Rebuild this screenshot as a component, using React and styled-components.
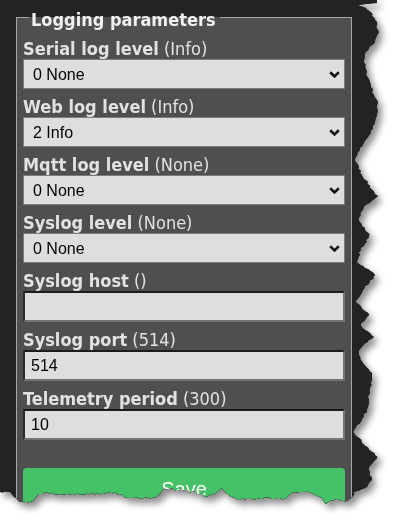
import React from 'react'
import styled, { createGlobalStyle } from 'styled-components'

const GlobalStyle = createGlobalStyle`
  html, body {
    margin: 0;
    padding: 0;
    background: #fff;
  }
`

// key points of the torn edge: right side top to bottom, then bottom right to left
const rightEdge = [
  [378, 0], [376, 3], [357, 5], [366, 8], [372, 14], [376, 22], [378, 32], [374, 42],
  [366, 52], [364, 62], [366, 72], [370, 82], [373, 92], [377, 102], [378, 112],
  [375, 122], [369, 135], [360, 148], [355, 160], [362, 175], [371, 188], [377, 196],
  [366, 205], [358, 220], [370, 236], [360, 250], [357, 262], [376, 275], [362, 290],
  [356, 302], [369, 315], [360, 325], [373, 337], [358, 350], [362, 362], [373, 375],
  [370, 390], [368, 402], [366, 412], [354, 432], [362, 442], [377, 457], [368, 470],
  [372, 480], [366, 488], [354, 492], [352, 497],
]
const bottomEdge = [
  [347, 502], [336, 500], [326, 503], [320, 496], [310, 492], [292, 492], [285, 498],
  [262, 498], [240, 499], [230, 496], [222, 488], [215, 494], [205, 496], [195, 492],
  [178, 490], [165, 488], [158, 496], [150, 498], [125, 497], [115, 493], [80, 494],
  [40, 493], [35, 499], [24, 503], [20, 502], [15, 498], [10, 493], [0, 492],
]

const buildTear = () => {
  let seed = 7
  const rnd = () => {
    seed = (seed * 16807) % 2147483647
    return seed / 2147483647 - 0.5
  }
  const pts = [[0, 0]]
  const walk = (list, axis) => {
    for (let i = 0; i < list.length - 1; i++) {
      const [x1, y1] = list[i]
      const [x2, y2] = list[i + 1]
      const steps = Math.max(1, Math.round(Math.hypot(x2 - x1, y2 - y1) / 2.5))
      for (let s = 0; s < steps; s++) {
        const t = s / steps
        let x = x1 + (x2 - x1) * t
        let y = y1 + (y2 - y1) * t
        if (axis === 'x') x += rnd() * 2.4
        else y += rnd() * 2.4
        pts.push([x, y])
      }
    }
    pts.push(list[list.length - 1])
  }
  walk(rightEdge, 'x')
  walk(bottomEdge, 'y')
  return `polygon(${pts.map(([x, y]) => `${x.toFixed(1)}px ${y.toFixed(1)}px`).join(', ')})`
}

const tear = buildTear()

const labelFont = `"DejaVu Sans Condensed", "DejaVu Sans", sans-serif`

const Shadow = styled.div`
  width: 400px;
  height: 531px;
  filter: drop-shadow(0 0 0.6px rgba(0, 0, 0, 0.95)) drop-shadow(4px 5px 3.5px rgba(0, 0, 0, 0.45));
`

const Paper = styled.div`
  width: 400px;
  height: 531px;
  box-sizing: border-box;
  padding: 0 0 0 16px;
  overflow: hidden;
  background: #232323;
  clip-path: ${p => p.$clip};
`

const Fieldset = styled.fieldset`
  margin: 5px 0 0 0;
  width: 322px;
  padding: 9px 6px 20px 6px;
  border: 1px solid #a8a8a8;
  background: #4f4f4f;
`

const Legend = styled.legend`
  margin-left: 6px;
  padding: 4px 4px 0 2px;
  line-height: 21px;
  font-family: ${labelFont};
  font-stretch: semi-condensed;
  font-weight: 700;
  font-size: 18px;
  color: #f0f0f0;
`

const Field = styled.div`
  display: flex;
  flex-direction: column;
  margin-bottom: 8px;
`

const Label = styled.label`
  display: block;
  line-height: 20px;
  font-family: ${labelFont};
  font-stretch: semi-condensed;
  font-size: 18px;
  color: #e2e2e2;
  white-space: nowrap;

  b {
    font-weight: 700;
  }
`

const SelectWrap = styled.div`
  position: relative;
  height: 30px;

  svg {
    position: absolute;
    right: 5px;
    top: 12px;
    pointer-events: none;
  }
`

const Select = styled.select`
  appearance: none;
  width: 100%;
  height: 30px;
  box-sizing: border-box;
  margin: 0;
  padding: 0 24px 0 9px;
  border: 1px solid #7c7c7c;
  border-radius: 0;
  background: #dedede;
  font-family: "Liberation Sans", Arial, sans-serif;
  font-size: 16px;
  color: #000;
  outline: none;
`

const Input = styled.input`
  width: 100%;
  height: 31px;
  box-sizing: border-box;
  margin: 0;
  padding: 0 6px;
  border: 2px solid;
  border-color: #1c1c1c #747474 #747474 #2a2a2a;
  background: #dedede;
  font-family: "Liberation Sans", Arial, sans-serif;
  font-size: 16px;
  color: #000;
  outline: none;
`

const SaveButton = styled.button`
  display: block;
  width: 100%;
  height: 42px;
  margin-top: 28px;
  border: none;
  border-radius: 4px;
  background: #45c267;
  color: #fff;
  font-family: "Liberation Sans", Arial, sans-serif;
  font-size: 20px;
  cursor: pointer;
`

const Chevron = () => (
  <svg width="11" height="7" viewBox="0 0 11 7">
    <polyline points="1.2,1.2 5.5,5.4 9.8,1.2" fill="none" stroke="#111" strokeWidth="2.6" />
  </svg>
)

const levels = ['0 None', '1 Error', '2 Info', '3 Debug', '4 Debug more']

const selects = [
  { name: 'Serial log level', def: 'Info', value: '0 None' },
  { name: 'Web log level', def: 'Info', value: '2 Info' },
  { name: 'Mqtt log level', def: 'None', value: '0 None' },
  { name: 'Syslog level', def: 'None', value: '0 None' },
]

const inputs = [
  { name: 'Syslog host', def: '', value: '' },
  { name: 'Syslog port', def: '514', value: '514' },
  { name: 'Telemetry period', def: '300', value: '10' },
]

const App = () => (
  <>
    <GlobalStyle />
    <Shadow>
      <Paper $clip={tear}>
        <Fieldset>
          <Legend>Logging parameters</Legend>
          {selects.map(s => (
            <Field key={s.name}>
              <Label><b>{s.name}</b> ({s.def})</Label>
              <SelectWrap>
                <Select defaultValue={s.value}>
                  {levels.map(l => <option key={l}>{l}</option>)}
                </Select>
                <Chevron />
              </SelectWrap>
            </Field>
          ))}
          {inputs.map(i => (
            <Field key={i.name}>
              <Label><b>{i.name}</b> ({i.def})</Label>
              <Input type="text" defaultValue={i.value} />
            </Field>
          ))}
          <SaveButton>Save</SaveButton>
        </Fieldset>
      </Paper>
    </Shadow>
  </>
)

export default App
